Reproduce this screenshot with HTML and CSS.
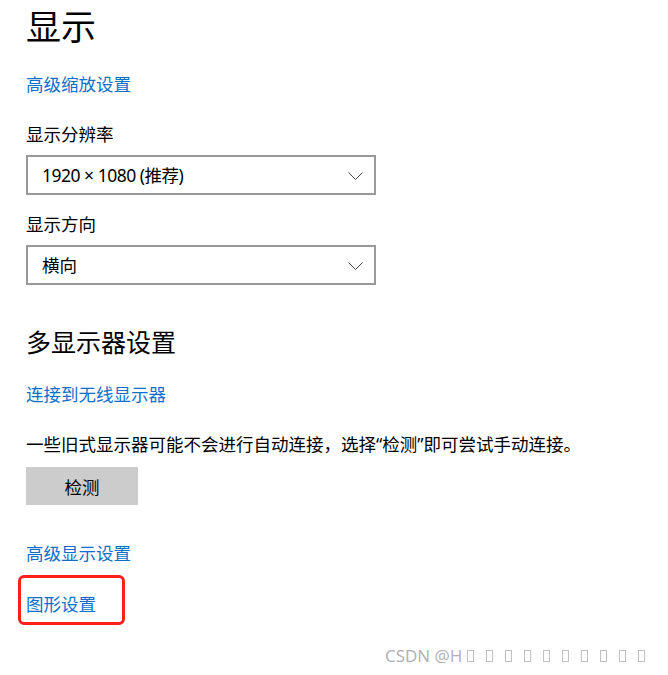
FILE: index.html
```html
<!DOCTYPE html>
<html lang="zh-CN">
<head>
<meta charset="utf-8">
<title>显示</title>
<link rel="stylesheet" href="styles.css">
</head>
<body>
<main class="page">
  <h1 class="title">显示</h1>
  <a class="link link-scale" href="#">高级缩放设置</a>

  <div class="label label-res">显示分辨率</div>
  <div class="select select-res">
    <span class="select-text select-text-res">1920 × 1080 (推荐)</span>
    <svg class="chevron" width="15" height="8" viewBox="0 0 15 8"><polyline points="0.5,0.5 7.5,7.5 14.5,0.5" fill="none" stroke="#444" stroke-width="1"/></svg>
  </div>

  <div class="label label-dir">显示方向</div>
  <div class="select select-dir">
    <span class="select-text">横向</span>
    <svg class="chevron" width="15" height="8" viewBox="0 0 15 8"><polyline points="0.5,0.5 7.5,7.5 14.5,0.5" fill="none" stroke="#444" stroke-width="1"/></svg>
  </div>

  <h2 class="subtitle">多显示器设置</h2>
  <a class="link link-wireless" href="#">连接到无线显示器</a>
  <p class="desc">一些旧式显示器可能不会进行自动连接，选择“检测”即可尝试手动连接。</p>
  <button class="btn" type="button">检测</button>

  <a class="link link-adv" href="#">高级显示设置</a>
  <div class="highlight">
    <a class="link link-gfx" href="#">图形设置</a>
  </div>
</main>
<div class="watermark">CSDN @H<span class="tofu"></span><span class="tofu"></span><span class="tofu"></span><span class="tofu"></span><span class="tofu"></span><span class="tofu"></span><span class="tofu"></span><span class="tofu"></span><span class="tofu"></span><span class="tofu"></span></div>
</body>
</html>
```

FILE: styles.css
```css
html, body {
  margin: 0;
  padding: 0;
  background: #ffffff;
}

body {
  font-family: "Noto Sans", "Noto Sans CJK SC", sans-serif;
  color: #000;
  width: 668px;
  height: 675px;
  overflow: hidden;
  position: relative;
}

.page {
  display: flex;
  flex-direction: column;
  align-items: flex-start;
  padding-left: 26px;
}

.title {
  font-size: 35px;
  font-weight: 400;
  line-height: 40px;
  margin: 7px 0 0 0;
}

.link {
  color: #0f6fcb;
  text-decoration: none;
  font-size: 17.5px;
  line-height: 24px;
  display: block;
}

.link-scale { margin-top: 25px; }

.label {
  font-size: 17.5px;
  line-height: 24px;
}

.label-res { margin-top: 26px; }
.label-dir { margin-top: 17px; }

.select {
  box-sizing: border-box;
  width: 350px;
  height: 40px;
  border: 2px solid #999999;
  display: flex;
  align-items: center;
  justify-content: space-between;
  padding: 0 11px 0 14px;
  margin-top: 9px;
}

.select-text {
  font-size: 17.5px;
  line-height: 24px;
}

.select-text-res {
  letter-spacing: -0.5px;
}

.chevron {
  display: block;
  margin-top: 2px;
}

.subtitle {
  font-size: 25px;
  font-weight: 400;
  line-height: 32px;
  margin: 41px 0 0 0;
}

.link-wireless { margin-top: 24px; }

.desc {
  font-size: 17.5px;
  line-height: 24px;
  margin: 26px 0 0 0;
}

.btn {
  margin-top: 11px;
  width: 112px;
  height: 38px;
  border: none;
  background: #cccccc;
  font-family: inherit;
  font-size: 17.5px;
  color: #000;
  padding: 0;
}

.link-adv { margin-top: 36px; }

.highlight {
  margin-top: 10px;
  margin-left: -8px;
  box-sizing: border-box;
  width: 107px;
  height: 50px;
  border: 3px solid #ff1f1f;
  border-radius: 6px;
  padding: 14px 0 0 5px;
}

.watermark {
  position: absolute;
  left: 385px;
  top: 645px;
  font-family: "Open Sans", "Noto Sans", sans-serif;
  font-size: 17px;
  line-height: 22px;
  color: #b0b0b0;
  display: flex;
  align-items: center;
  white-space: nowrap;
}

.tofu {
  display: inline-block;
  box-sizing: border-box;
  width: 7px;
  height: 12px;
  border: 1px solid #c0c0c0;
  margin-left: 5px;
  margin-right: 7px;
}
```
